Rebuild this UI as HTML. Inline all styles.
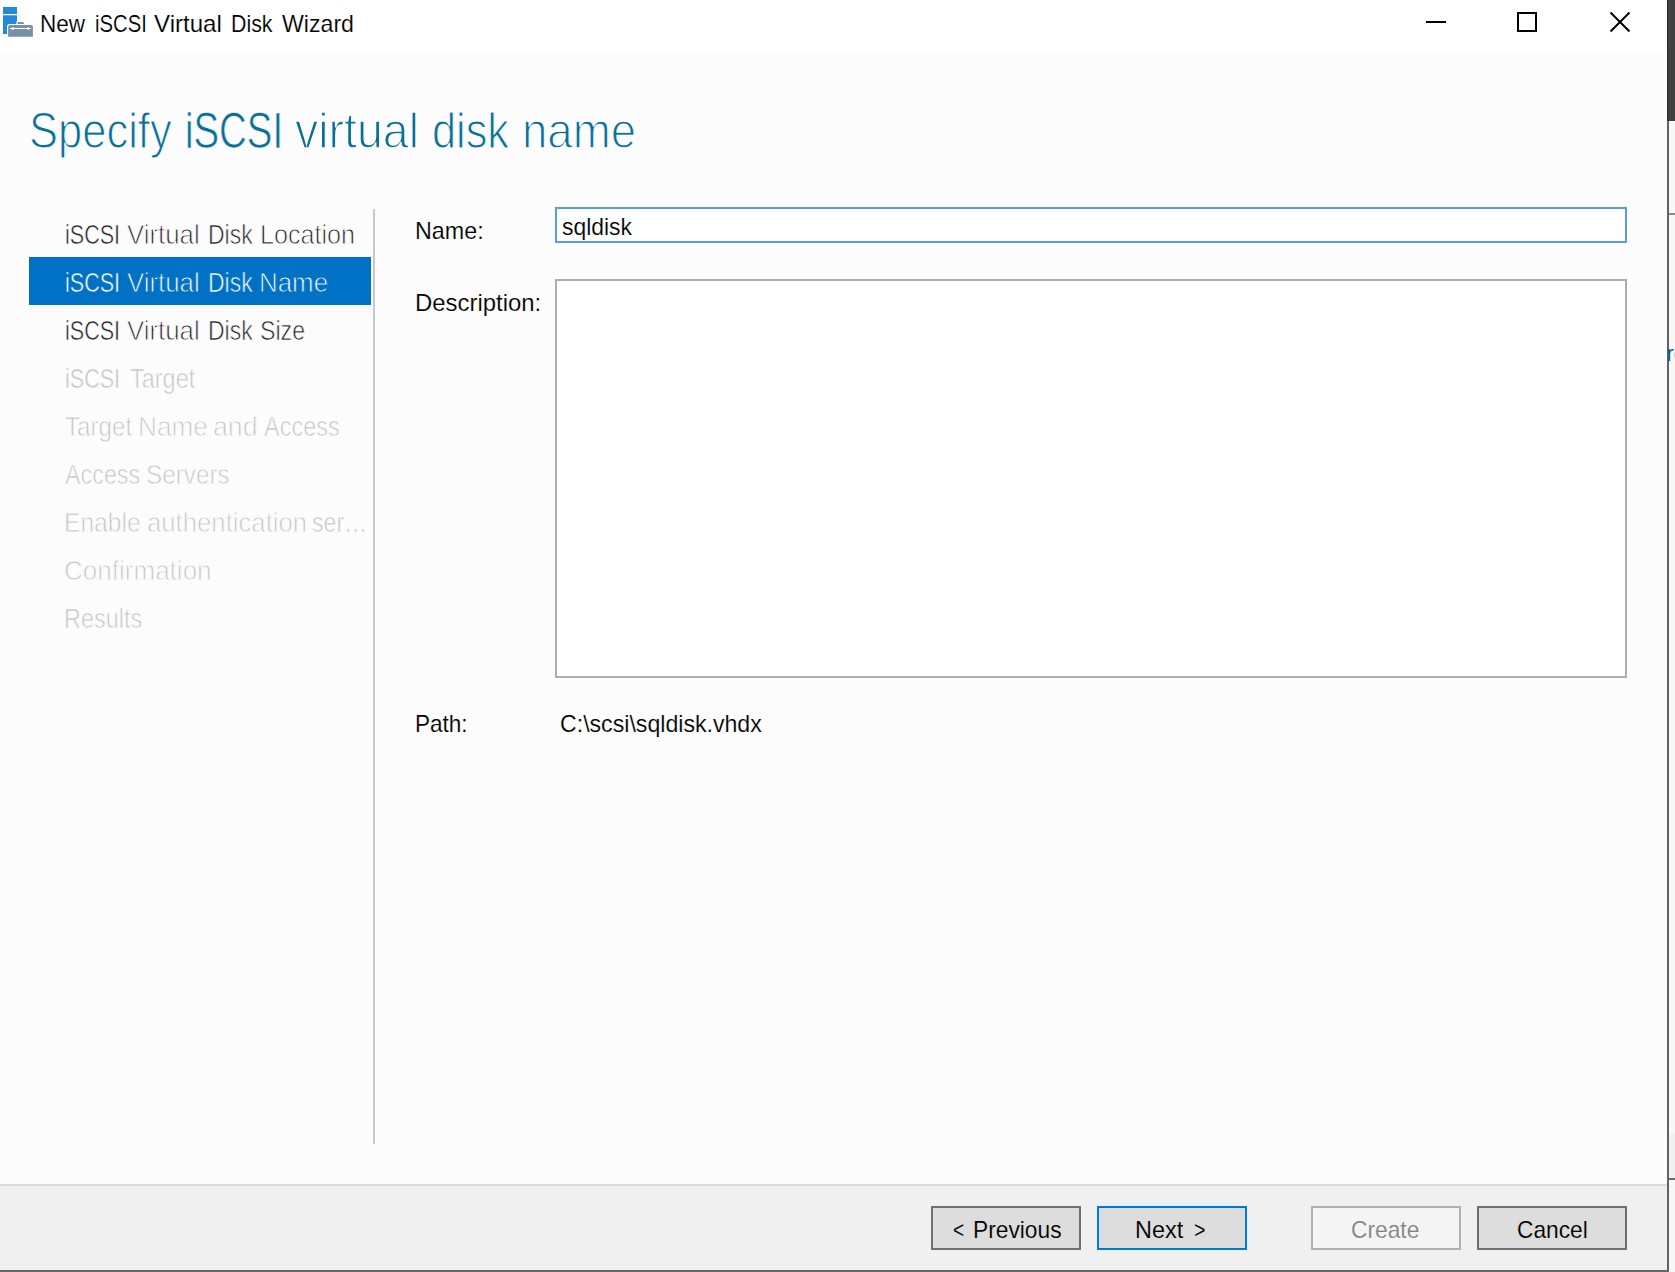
<!DOCTYPE html>
<html><head><meta charset="utf-8"><title>New iSCSI Virtual Disk Wizard</title>
<style>
*{box-sizing:border-box;margin:0;padding:0}
html,body{width:1675px;height:1272px;overflow:hidden;background:#fcfcfc;font-family:"Liberation Sans",sans-serif;color:#000}
.abs{position:absolute}
.t{position:absolute;line-height:1;white-space:pre;transform-origin:0 0}
.tb{font-size:24px;color:#000;-webkit-text-stroke:0.15px #fff}
.hd{font-size:50px;color:#0b7099;-webkit-text-stroke:1.1px #fcfcfc}
.nv{font-size:28px;color:#222;-webkit-text-stroke:0.8px #fcfcfc}
.nv.sl{color:#fff;-webkit-text-stroke:0.8px #0072c6}
.nv.ds{color:#c3c3c3}
.fm{font-size:24px;color:#000;-webkit-text-stroke:0.15px #fcfcfc}
.fm.w{-webkit-text-stroke-color:#fff}
.fm.b{-webkit-text-stroke-color:#dddddd}
.fm.gr{color:#838383;-webkit-text-stroke-color:#f4f4f4}
#titlebar{left:0;top:0;width:1667px;height:51px;background:#fff}
#navsel{left:29px;top:257px;width:342px;height:48px;background:#0072c6}
#sep{left:373px;top:209px;width:2px;height:935px;background:#c8c8c8}
#name{left:555px;top:207px;width:1072px;height:36px;border:2px solid #569de5;background:#fff}
#desc{left:555px;top:279px;width:1072px;height:399px;border:2px solid #abadb3;background:#fff}
#footer{left:0;top:1184px;width:1667px;height:86px;background:#f0f0f0;border-top:2px solid #dadada}
.btn{top:1206px;width:150px;height:44px;border:2px solid #707070;background:#dddddd}
</style></head><body>
<div class="abs" id="titlebar"></div>
<div class="abs" id="navsel"></div>
<div class="abs" id="sep"></div>
<div class="abs" id="name"></div>
<div class="abs" id="desc"></div>
<div class="abs" id="footer"></div>
<div class="abs btn" style="left:931px"></div>
<div class="abs btn" style="left:1097px;border-color:#0078d7"></div>
<div class="abs btn" style="left:1311px;border-color:#adb2b5;background:#f4f4f4"></div>
<div class="abs btn" style="left:1477px"></div>
<span class="t tb" style="left:40.02px;top:12px;transform:scaleX(0.9391)">New</span>
<span class="t tb" style="left:95.22px;top:12px;transform:scaleX(0.8437)">iSCSI</span>
<span class="t tb" style="left:154.25px;top:12px;transform:scaleX(1.0038)">Virtual</span>
<span class="t tb" style="left:230.52px;top:12px;transform:scaleX(0.8899)">Disk</span>
<span class="t tb" style="left:282.16px;top:12px;transform:scaleX(0.9636)">Wizard</span>
<span class="t hd" style="left:29.19px;top:106px;transform:scaleX(0.8700);-webkit-text-stroke-width:1.17px">Specify</span>
<span class="t hd" style="left:184.82px;top:106px;transform:scaleX(0.7673);-webkit-text-stroke-width:0.72px">iSCSI</span>
<span class="t hd" style="left:294.84px;top:106px;transform:scaleX(0.9297);-webkit-text-stroke-width:1.38px">virtual</span>
<span class="t hd" style="left:431.62px;top:106px;transform:scaleX(0.8659);-webkit-text-stroke-width:1.15px">disk</span>
<span class="t hd" style="left:521.75px;top:106px;transform:scaleX(0.9125);-webkit-text-stroke-width:1.32px">name</span>
<span class="t nv" style="left:64.77px;top:221px;transform:scaleX(0.7699);-webkit-text-stroke-width:0.57px">iSCSI</span>
<span class="t nv" style="left:126.91px;top:221px;transform:scaleX(0.9215);-webkit-text-stroke-width:0.89px">Virtual</span>
<span class="t nv" style="left:208.15px;top:221px;transform:scaleX(0.8215);-webkit-text-stroke-width:0.69px">Disk</span>
<span class="t nv" style="left:259.73px;top:221px;transform:scaleX(0.8980);-webkit-text-stroke-width:0.85px">Location</span>
<span class="t nv sl" style="left:64.77px;top:269px;transform:scaleX(0.7699);-webkit-text-stroke-width:0.57px">iSCSI</span>
<span class="t nv sl" style="left:126.91px;top:269px;transform:scaleX(0.9215);-webkit-text-stroke-width:0.89px">Virtual</span>
<span class="t nv sl" style="left:208.15px;top:269px;transform:scaleX(0.8215);-webkit-text-stroke-width:0.69px">Disk</span>
<span class="t nv sl" style="left:259.16px;top:269px;transform:scaleX(0.9253);-webkit-text-stroke-width:0.9px">Name</span>
<span class="t nv" style="left:64.77px;top:317px;transform:scaleX(0.7699);-webkit-text-stroke-width:0.57px">iSCSI</span>
<span class="t nv" style="left:126.91px;top:317px;transform:scaleX(0.9215);-webkit-text-stroke-width:0.89px">Virtual</span>
<span class="t nv" style="left:208.15px;top:317px;transform:scaleX(0.8215);-webkit-text-stroke-width:0.69px">Disk</span>
<span class="t nv" style="left:260.25px;top:317px;transform:scaleX(0.8275);-webkit-text-stroke-width:0.71px">Size</span>
<span class="t nv ds" style="left:64.77px;top:365px;transform:scaleX(0.7699);-webkit-text-stroke-width:0.57px">iSCSI</span>
<span class="t nv ds" style="left:129.56px;top:365px;transform:scaleX(0.8380);-webkit-text-stroke-width:0.73px">Target</span>
<span class="t nv ds" style="left:64.84px;top:413px;transform:scaleX(0.8643);-webkit-text-stroke-width:0.78px">Target</span>
<span class="t nv ds" style="left:137.83px;top:413px;transform:scaleX(0.9352);-webkit-text-stroke-width:0.92px">Name</span>
<span class="t nv ds" style="left:213.43px;top:413px;transform:scaleX(0.9520);-webkit-text-stroke-width:0.94px">and</span>
<span class="t nv ds" style="left:263.87px;top:413px;transform:scaleX(0.8385);-webkit-text-stroke-width:0.73px">Access</span>
<span class="t nv ds" style="left:65.08px;top:461px;transform:scaleX(0.8329);-webkit-text-stroke-width:0.72px">Access</span>
<span class="t nv ds" style="left:146.38px;top:461px;transform:scaleX(0.8665);-webkit-text-stroke-width:0.79px">Servers</span>
<span class="t nv ds" style="left:64.08px;top:509px;transform:scaleX(0.8785);-webkit-text-stroke-width:0.81px">Enable</span>
<span class="t nv ds" style="left:146.52px;top:509px;transform:scaleX(0.9183);-webkit-text-stroke-width:0.89px">authentication</span>
<span class="t nv ds" style="left:312.37px;top:509px;transform:scaleX(0.8244);-webkit-text-stroke-width:0.7px">ser…</span>
<span class="t nv ds" style="left:64.07px;top:557px;transform:scaleX(0.9299);-webkit-text-stroke-width:0.91px">Confirmation</span>
<span class="t nv ds" style="left:64.20px;top:605px;transform:scaleX(0.8370);-webkit-text-stroke-width:0.73px">Results</span>
<span class="t fm" style="left:415.36px;top:219px;transform:scaleX(0.9714)">Name:</span>
<span class="t fm w" style="left:561.78px;top:215px;transform:scaleX(0.9545)">sqldisk</span>
<span class="t fm" style="left:415.31px;top:291px;transform:scaleX(0.9959)">Description:</span>
<span class="t fm" style="left:415.12px;top:712px;transform:scaleX(0.9391)">Path:</span>
<span class="t fm" style="left:559.50px;top:712px;transform:scaleX(0.9637)">C:\scsi\sqldisk.vhdx</span>
<span class="t fm b" style="left:952.90px;top:1218px;transform:scaleX(0.8000)">&lt;</span>
<span class="t fm b" style="left:973.10px;top:1218px;transform:scaleX(0.9481)">Previous</span>
<span class="t fm b" style="left:1134.95px;top:1218px;transform:scaleX(0.9766)">Next</span>
<span class="t fm b" style="left:1193.58px;top:1218px;transform:scaleX(0.8174)">&gt;</span>
<span class="t fm gr" style="left:1351.01px;top:1218px;transform:scaleX(0.9491)">Create</span>
<span class="t fm b" style="left:1516.62px;top:1218px;transform:scaleX(0.9477)">Cancel</span>

<svg class="abs" style="left:0;top:0" width="40" height="50" viewBox="0 0 40 50">
<rect x="3" y="7" width="14" height="7" fill="#218bd9"/>
<path d="M3 15.2H17V20.5L16 24H9.5Q7 24 7 26.5V34H3Z" fill="#218bd9"/>
<path d="M8.1 36.8V27Q8.1 25 10.1 25H30.9Q32.9 25 32.9 27V36.8Z" fill="#7691a7"/>
<path d="M17 24Q17.3 22 19 22H22.4Q24 22 24.2 24Z" fill="#7691a7"/>
<rect x="9.9" y="28" width="21" height="1" fill="#fff"/>
<circle cx="13" cy="28.5" r="1.2" fill="#fff"/><circle cx="28" cy="28.5" r="1.2" fill="#fff"/>
</svg>
<svg class="abs" style="left:1400px;top:0" width="267" height="50" viewBox="1400 0 267 50">
<rect x="1426" y="21" width="20" height="2" fill="#000"/>
<rect x="1518" y="13" width="18" height="18" fill="none" stroke="#000" stroke-width="2"/>
<path d="M1610.5 12.5L1629.5 31.5M1629.5 12.5L1610.5 31.5" stroke="#000" stroke-width="2" fill="none"/>
</svg>
<div class="abs" style="left:1667px;top:0;width:8px;height:1272px;background:#f7f7f7"></div>
<div class="abs" style="left:1667px;top:0;width:8px;height:121px;background:#404040;border-left:1px solid #2a2a2a"></div>
<div class="abs" style="left:1667px;top:121px;width:2px;height:1151px;background:#636363"></div>
<div class="abs" style="left:1669px;top:213px;width:6px;height:2px;background:#8a8a8a"></div>
<div class="abs" style="left:1669px;top:1134px;width:6px;height:45px;background:#f0f0f0"></div>
<div class="abs" style="left:1669px;top:1178px;width:6px;height:2px;background:#6a6a6a"></div>
<div class="abs" style="left:1666.5px;top:341px;font-size:22px;line-height:26px;color:#0a5a8c;white-space:nowrap">re</div>
<div class="abs" style="left:0;top:1270px;width:1669px;height:2px;background:#666"></div>
</body></html>
